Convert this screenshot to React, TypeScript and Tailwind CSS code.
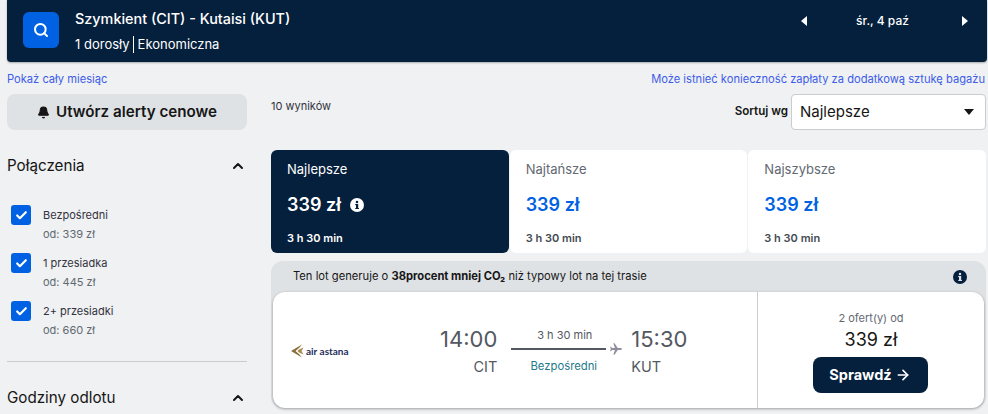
import React from 'react';
import { Bell, ChevronUp, Check, Search, ArrowRight } from 'lucide-react';

const stops = [
  { label: "Bezpośredni", price: "od: 339 zł" },
  { label: "1 przesiadka", price: "od: 445 zł" },
  { label: "2+ przesiadki", price: "od: 660 zł" },
];

const tabs = [
  { label: "Najlepsze", active: true },
  { label: "Najtańsze", active: false },
  { label: "Najszybsze", active: false },
];

const InfoIcon = ({ className }: { className: string }) => (
  <svg viewBox="0 0 14 14" className={className}>
    <circle cx="7" cy="7" r="7" fill="currentColor" />
    <rect x="6" y="6" width="2.2" height="5" rx="0.4" fill="var(--hole)" />
    <rect x="5.2" y="6" width="2" height="1.1" fill="var(--hole)" />
    <rect x="5.2" y="10" width="3.8" height="1.1" rx="0.3" fill="var(--hole)" />
    <circle cx="7" cy="3.9" r="1.25" fill="var(--hole)" />
  </svg>
);

const Caret = ({ left }: { left?: boolean }) => (
  <svg viewBox="0 0 6 10" className="w-[6px] h-[10px] fill-white">
    {left ? <path d="M6 0v10L0 5z" /> : <path d="M0 0v10l6-5z" />}
  </svg>
);

const Logo = () => (
  <div className="flex items-center gap-[2px] w-[56px] mt-px">
    <svg viewBox="0 0 13 14" className="w-[13px] h-[14px] shrink-0">
      <path d="M0 7 L11 0.500 L8.500 3.500 L4.500 7 L8.500 10.500 L11 13.500 Z" fill="#8a6d3b" />
      <path d="M8 5.500 L12.500 3.500 L10.500 7 L12.500 10.500 L8 8.500 L6.500 7 Z" fill="#a68a4f" />
    </svg>
    <span className="text-[10px] font-bold text-[#1f2d5c] whitespace-nowrap leading-none font-['Lato',sans-serif]">air astana</span>
  </div>
);

export default function App() {
  return (
    <div className="w-[988px] h-[414px] overflow-hidden bg-[#eff1f2] font-['Inter',sans-serif] text-[#161616] pl-[7px] pr-px">
      <header className="h-[62px] bg-[#05203c] rounded-b-[4px] flex items-center pl-4 pr-[19px] text-white shadow-[0_1px_2px_rgba(0,0,0,0.3)]">
        <div className="w-9 h-9 rounded-[6px] bg-[#0062e3] flex items-center justify-center mb-[2px]">
          <Search size={16} strokeWidth={3} />
        </div>
        <div className="ml-4 flex flex-col mb-px">
          <div className="text-[14.4px] leading-[20px] font-medium">Szymkient (CIT) - Kutaisi (KUT)</div>
          <div className="mt-[7px] flex items-center text-[13px] leading-[17px]">
            <span className="pr-[3px]">1 dorosły</span>
            <span className="border-l border-white pl-[4px]">Ekonomiczna</span>
          </div>
        </div>
        <div className="ml-auto mb-[20px] flex items-center">
          <Caret left />
          <span className="w-[155px] pr-1 text-center text-[12px] font-medium">śr., 4 paź</span>
          <Caret />
        </div>
      </header>

      <div className="flex justify-between items-center h-[30px] pt-1 text-[11.15px] text-[#3d5ce8] mr-[2px]">
        <span>Pokaż cały miesiąc</span>
        <span>Może istnieć konieczność zapłaty za dodatkową sztukę bagażu</span>
      </div>

      <div className="flex gap-[24px] mt-[2px]">
        <aside className="w-[240px] shrink-0">
          <button className="w-full h-9 rounded-[8px] bg-[#dfe2e5] flex items-center justify-center gap-[6px] text-[15.2px] font-semibold">
            <Bell size={13} fill="#161616" />
            Utwórz alerty cenowe
          </button>

          <div className="mt-[26px] flex items-center justify-between text-[15.2px] leading-5">
            <span>Połączenia</span>
            <ChevronUp size={16} strokeWidth={3} className="mr-px" />
          </div>

          <div className="mt-[29px] flex flex-col gap-[10px] pl-1">
            {stops.map((stop, index) => (
              <div key={index} className="flex h-[38px]">
                <div className="w-5 h-5 rounded-[3px] bg-[#0062e3] flex items-center justify-center text-white shrink-0">
                  <Check size={13} strokeWidth={4} />
                </div>
                <div className="ml-3 pt-px text-[11px] leading-[19px]">
                  <div className="text-[#33333f]">{stop.label}</div>
                  <div className="text-[#626971]">{stop.price}</div>
                </div>
              </div>
            ))}
          </div>

          <div className="mt-[22px] border-t border-[#c9ccd0]" />

          <div className="mt-[26px] flex items-center justify-between text-[15.2px] leading-5">
            <span>Godziny odlotu</span>
            <ChevronUp size={16} strokeWidth={3} className="mr-px" />
          </div>
        </aside>

        <main className="flex-1 min-w-0 mr-px">
          <div className="h-[56px] flex items-start justify-between">
            <span className="text-[11px] leading-[20px] mt-[2px] text-[#33333f]">10 wyników</span>
            <div className="flex items-center gap-[3px]">
              <span className="text-[11.6px] font-semibold">Sortuj wg</span>
              <div className="w-[195px] h-[36px] bg-white border border-[#c9ccd0] rounded-[4px] flex items-center justify-between pl-[8px] pr-[11px] text-[15px] text-[#161616]">
                Najlepsze
                <svg viewBox="0 0 10 6" className="w-[10px] h-[6px] fill-[#161616]"><path d="M0 0h10L5 6z" /></svg>
              </div>
            </div>
          </div>

          <div className="flex gap-px">
            {tabs.map((tab, index) => (
              <div
                key={index}
                className={tab.active
                  ? "flex-1 h-[103px] rounded-[6px] bg-[#05203c] text-white pl-4 pt-[9px]"
                  : "flex-1 h-[103px] rounded-[6px] bg-white pl-4 pt-[9px]"}
              >
                <div className={tab.active ? "text-[13px] leading-5" : "text-[13px] leading-5 text-[#626971]"}>{tab.label}</div>
                <div className={tab.active
                  ? "mt-[14px] flex items-center gap-[9px] text-[18px] leading-6 font-semibold"
                  : "mt-[14px] text-[18px] leading-6 font-semibold text-[#0062e3]"}>
                  339 zł
                  {tab.active && <InfoIcon className="w-[14px] h-[14px] text-white [--hole:#05203c]" />}
                </div>
                <div className={tab.active ? "mt-[13px] text-[11px] leading-4 font-semibold" : "mt-[13px] text-[11px] leading-4 font-semibold text-[#444c54]"}>3 h 30 min</div>
              </div>
            ))}
          </div>

          <div className="mt-2 rounded-[12px] bg-[#dfe2e5]">
            <div className="h-[31px] flex items-center justify-between pl-[22px] pr-[19px] text-[11.2px] text-[#161616]">
              <span>Ten lot generuje o <b className="font-bold">38procent mniej CO₂</b> niż typowy lot na tej trasie</span>
              <InfoIcon className="w-[14px] h-[14px] text-[#05203c] [--hole:#dfe2e5]" />
            </div>
            <div className="h-[116px] bg-white rounded-[12px] flex shadow-[0_1px_3px_rgba(0,0,0,0.35)] mx-[2px]">
              <div className="flex-1 flex items-center pl-[18px]">
                <Logo />
                <div className="ml-[93px] flex flex-col items-end mt-px">
                  <span className="text-[22px] leading-[28px] text-[#545860]">14:00</span>
                  <span className="mt-1 text-[14.5px] leading-5 text-[#545860]">CIT</span>
                </div>
                <div className="ml-[14px] w-[112px] flex flex-col items-center mt-px">
                  <span className="text-[11px] leading-[16px] text-[#545860] mr-[5px]">3 h 30 min</span>
                  <div className="flex items-center w-full -mt-px">
                    <div className="h-[2px] w-[95px] bg-[#545860]" />
                    <svg viewBox="0 0 24 24" className="w-[14px] h-[14px] ml-[3px] fill-[#8e8e9c]"><path d="M22 12c0-1-1-1.600-2-1.600h-5L9.500 2H7.500l2.600 8.400H5.200L3.400 8H2l1 4-1 4h1.400l1.800-2.400h4.900L7.500 22h2l5.500-8.400h5c1 0 2-.6 2-1.600z" /></svg>
                  </div>
                  <span className="mt-[2px] text-[11.3px] leading-[16px] text-[#1f7a8c] mr-[7px]">Bezpośredni</span>
                </div>
                <div className="ml-[8px] flex flex-col items-start mt-px">
                  <span className="text-[22px] leading-[28px] text-[#545860]">15:30</span>
                  <span className="mt-1 text-[14.5px] leading-5 text-[#545860]">KUT</span>
                </div>
              </div>
              <div className="w-[227px] border-l border-[#c9ccd0] flex flex-col items-center pt-[18px]">
                <span className="text-[11px] leading-4 text-[#626971]">2 ofert(y) od</span>
                <span className="mt-[2px] text-[18px] leading-6 text-[#161616]">339 zł</span>
                <button className="mt-[5px] mr-[2px] w-[115px] h-9 rounded-[8px] bg-[#05203c] text-white text-[14.5px] font-bold flex items-center justify-center gap-[3px]">
                  Sprawdź
                  <ArrowRight size={16} strokeWidth={2.5} />
                </button>
              </div>
            </div>
          </div>
        </main>
      </div>
    </div>
  );
}
